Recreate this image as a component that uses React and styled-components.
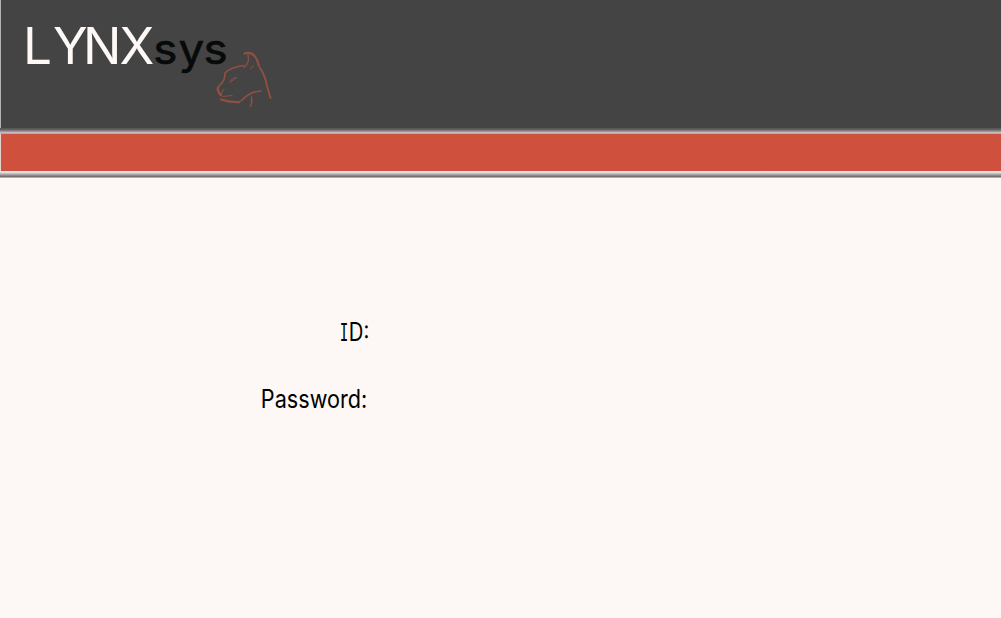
import React from "react";
import styled, { createGlobalStyle } from "styled-components";

const GlobalStyle = createGlobalStyle`
  html, body { margin: 0; background: #fdf8f5; }
  * { box-sizing: border-box; }
`;

const Page = styled.div`
  display: flex;
  flex-direction: column;
  width: 100%;
  height: 618px;
  overflow: hidden;
  background: #fdf8f5;
  font-family: Inter, "Liberation Sans", sans-serif;
`;

const Header = styled.header`
  flex: none;
  height: 128px;
  background: #444;
  border-left: 1px solid #b5b3b2;
`;

const Logo = styled.svg`
  display: block;
  width: 290px;
  height: 120px;
`;

const Wordmark = styled.text`
  font-family: Inter, "Liberation Sans", sans-serif;
  font-size: ${(p) => p.$size}px;
  font-weight: ${(p) => p.$weight};
  fill: ${(p) => p.$color};
`;

const Rule = styled.div`
  flex: none;
  height: ${(p) => p.$height}px;
  background: linear-gradient(${(p) => p.$shades});
`;

const NavBar = styled.nav`
  flex: none;
  height: 37px;
  background: #cf513d;
  border-left: 1px solid #e5d5d0;
`;

const LoginForm = styled.main`
  display: grid;
  grid-template-columns: 369px;
  grid-auto-rows: 67px;
  padding-top: 121px;
  justify-items: end;
`;

const FieldLabel = styled.label`
  display: flex;
  height: 67px;
  line-height: 67px;
  font-size: 25px;
  color: #000;
  white-space: nowrap;
  padding-right: ${(p) => p.$inset || 0}px;
  transform: scaleX(${(p) => p.$stretch});
  transform-origin: right center;
`;

const SlabLetter = styled.span`
  font-family: "DejaVu Sans Mono", monospace;
  width: 12px;
  display: inline-flex;
  justify-content: center;
  transform: scaleX(0.7);
`;

function LynxLogo() {
  return (
    <Logo viewBox="1 0 290 120">
      <Wordmark $size={51} $weight={400} $color="#fef9f6" y="64" x="23">
        <tspan textLength="29" lengthAdjust="spacingAndGlyphs">L</tspan>
      </Wordmark>
      <Wordmark $size={51} $weight={400} $color="#fef9f6" y="64" x="53 83 119.500">YNX</Wordmark>
      <Wordmark $size={42} $weight={400} $color="#060a09" stroke="#060a09" strokeWidth="0.6" y="64" x="140.500 163.700 186.800" transform="scale(1.090 1)">sys</Wordmark>
      <g fill="none" stroke="#914f42" strokeWidth="1.7" strokeLinecap="round" strokeLinejoin="round">
        <path d="M244 65.500Q231 67 225 73Q225 81 220 85L217.500 88" />
        <path d="M218 88Q217 91 221 95" strokeWidth="2.600" />
        <path d="M221 94L224 89" strokeWidth="1" />
        <path d="M223 96.500L232 95.500" strokeWidth="1.200" />
        <path d="M221 99.500Q229 102.500 239 102" strokeWidth="2.300" />
        <path d="M241 101Q250 91.500 261 91" />
        <path d="M251.500 97Q252.500 102 250.500 106.500" strokeWidth="1.500" />
        <path d="M244.500 53.500Q253 51 257 60L259 66" strokeWidth="2.200" />
        <path d="M248 55Q250 63 244 67.500" strokeWidth="1.300" />
        <path d="M250.500 69L253 66" strokeWidth="1" />
        <path d="M260 68Q265 75 267 86L270.500 98" strokeWidth="1.900" />
        <path d="M230 82Q232 77.500 236.500 77.500Q233 80.500 230 82" strokeWidth="1" />
      </g>
    </Logo>
  );
}

export default function App() {
  return (
    <>
      <GlobalStyle />
      <Page>
        <Header><LynxLogo /></Header>
        <Rule $height={6} $shades="#565254, #645f61, #8c8788, #c1bcbc, #b7a5a2" />
        <NavBar />
        <Rule $height={7} $shades="#f0e4e0, #e4dfdf, #bcb7b7, #979193, #746c6e, #d8d2d1" />
        <LoginForm>
          <FieldLabel $stretch={0.81}><SlabLetter>I</SlabLetter>D:</FieldLabel>
          <FieldLabel $stretch={0.865} $inset={2}>Password:</FieldLabel>
        </LoginForm>
      </Page>
    </>
  );
}
